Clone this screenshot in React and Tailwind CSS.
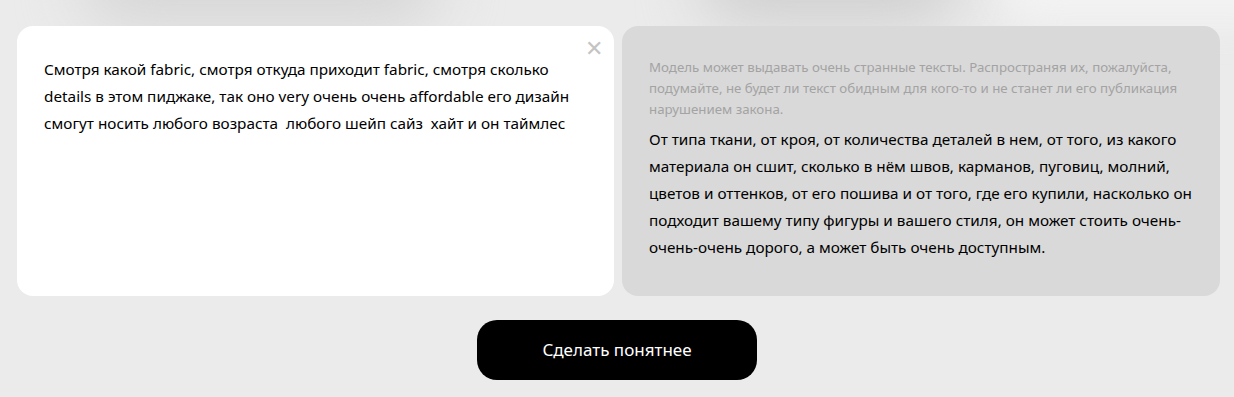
import React from "react";

const App = () => {
  return (
    <div className="relative w-[1234px] h-[397px] overflow-hidden bg-[#ebebeb] font-['Noto_Sans',sans-serif]">
      {/* soft blobs on top edge */}
      <div className="absolute -top-16 left-[80px] w-[360px] h-[90px] rounded-full bg-[#d6d6d6] blur-[30px] pointer-events-none"></div>
      <div className="absolute -top-14 left-[700px] w-[260px] h-[80px] rounded-full bg-[#cfcfcf] blur-[30px] pointer-events-none"></div>
      <div className="absolute -top-12 left-[1000px] w-[300px] h-[70px] rounded-full bg-[#f3f3f3] blur-[20px] pointer-events-none"></div>

      <div className="relative flex flex-col items-start pt-[26px] pl-[17px]">
        <div className="flex gap-[8px]">
          {/* Input card */}
          <div className="relative shrink-0 w-[597px] h-[270px] bg-white rounded-[16px] px-[27px] pt-[30px]">
            <button className="absolute top-[10px] right-[11px] text-[#c4c4c4] text-[22px] leading-none font-light">✕</button>
            <p className="text-[15.3px] leading-[27px] text-black">
              Смотря какой fabric, смотря откуда приходит fabric, смотря сколько details в этом пиджаке, так оно very очень очень affordable его дизайн смогут носить любого возраста&nbsp; любого шейп сайз&nbsp; хайт и он таймлес
            </p>
          </div>

          {/* Output card */}
          <div className="shrink-0 w-[598px] h-[270px] bg-[#d9d9d9] rounded-[16px] pl-[27px] pr-[20px] pt-[31px]">
            <p className="text-[13.3px] leading-[21px] text-[#a3a3a3]">
              Модель может выдавать очень странные тексты. Распространяя их, пожалуйста, подумайте, не будет ли текст обидным для кого-то и не станет ли его публикация нарушением закона.
            </p>
            <p className="mt-[6px] text-[15.3px] leading-[27px] text-black">
              От типа ткани, от кроя, от количества деталей в нем, от того, из какого материала он сшит, сколько в нём швов, карманов, пуговиц, молний, цветов и оттенков, от его пошива и от того, где его купили, насколько он подходит вашему типу фигуры и вашего стиля, он может стоить очень-очень-очень дорого, а может быть очень доступным.
            </p>
          </div>
        </div>

        <button className="self-center -ml-[17px] mt-[24px] w-[280px] h-[60px] rounded-[20px] bg-black text-white text-[17px]">
          Сделать понятнее
        </button>
      </div>
    </div>
  );
};

export default App;
